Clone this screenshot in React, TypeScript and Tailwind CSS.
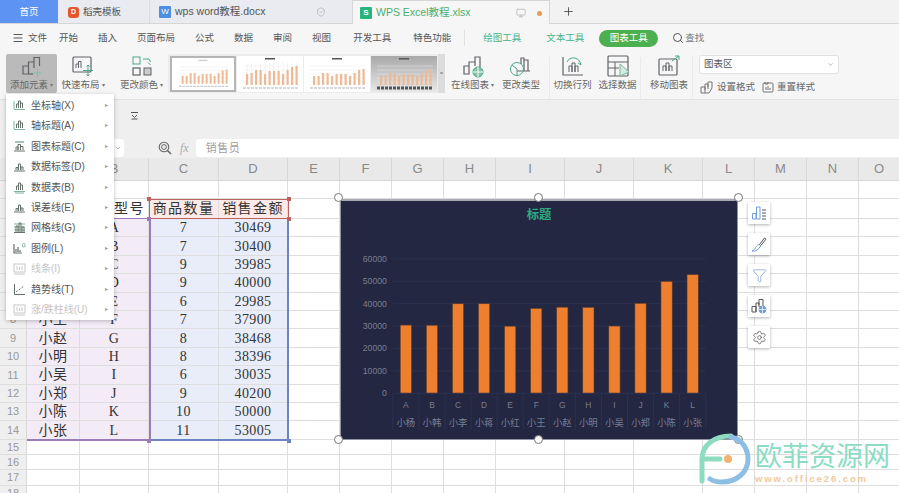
import { ChevronDown, Menu, Plus, Search, Settings, Filter, ShieldCheck, Monitor } from "lucide-react";

const columns = [
  { label: "A", width: "w-[53px]" },
  { label: "B", width: "w-[69px]" },
  { label: "C", width: "w-[70px]" },
  { label: "D", width: "w-[69px]" },
  { label: "E", width: "w-[52px]" },
  { label: "F", width: "w-[52px]" },
  { label: "G", width: "w-[52px]" },
  { label: "H", width: "w-[52px]" },
  { label: "I", width: "w-[69px]" },
  { label: "J", width: "w-[69px]" },
  { label: "K", width: "w-[69px]" },
  { label: "L", width: "w-[52px]" },
  { label: "M", width: "w-[52px]" },
  { label: "N", width: "w-[52px]" },
  { label: "O", width: "w-[41px]" },
];

const sales = [
  ["小杨", "A", "7", 30469],
  ["小韩", "B", "7", 30400],
  ["小李", "C", "9", 39985],
  ["小蒋", "D", "9", 40000],
  ["小红", "E", "6", 29985],
  ["小王", "F", "7", 37900],
  ["小赵", "G", "8", 38468],
  ["小明", "H", "8", 38396],
  ["小吴", "I", "6", 30035],
  ["小郑", "J", "9", 40200],
  ["小陈", "K", "10", 50000],
  ["小张", "L", "11", 53005],
] as const;

const menuItems = [
  { label: "坐标轴(X)", kind: "axis" },
  { label: "轴标题(A)", kind: "axisTitle" },
  { label: "图表标题(C)", kind: "title" },
  { label: "数据标签(D)", kind: "bars" },
  { label: "数据表(B)", kind: "table" },
  { label: "误差线(E)", kind: "bars" },
  { label: "网格线(G)", kind: "grid" },
  { label: "图例(L)", kind: "legend" },
  { label: "线条(I)", kind: "lines", disabled: true },
  { label: "趋势线(T)", kind: "trend" },
  { label: "涨/跌柱线(U)", kind: "updown", disabled: true },
];

function MenuIcon({ kind, disabled }: { kind: string; disabled?: boolean }) {
  const stroke = disabled ? "#c8c8c8" : "#66706a";
  const accent = disabled ? "#d5d5d5" : "#7fb59b";
  return (
    <svg width="13" height="13" viewBox="0 0 13 13" fill="none" stroke={stroke} strokeWidth="1">
      {(kind === "axis" || kind === "axisTitle" || kind === "table") && (
        <>
          <path d="M3.5 9V5H5.5V9M5.5 9V2H7.5V9M7.5 9V4H9.5V9" />
          <path d="M1 10.5H12" stroke={accent} />
          {kind !== "table" && <path d="M1 2V10" stroke={accent} />}
          {kind === "table" && <path d="M2 12H11" stroke={accent} />}
        </>
      )}
      {kind === "title" && (
        <>
          <path d="M2 2H11" stroke={accent} strokeWidth="1.5" />
          <path d="M3 10V7H5V10M5 10V4.5H7.5V10M7.5 10V6.5H10V10M1 11H12" />
        </>
      )}
      {kind === "bars" && <path d="M3 10V7.5H5V10M5.5 10V4H7.5V10M8 10V7H10V10M1 11H12" />}
      {kind === "grid" && (
        <>
          <path d="M1 3H12M1 6H12M1 9H12" stroke={accent} />
          <path d="M3 11V5H5V11M6 11V2H8V11M9 11V6H11V11M1 11.5H12" />
        </>
      )}
      {kind === "legend" && (
        <>
          <path d="M1 2V11H9M3 10V7M5 10V5M7 10V8" strokeWidth="1.2" />
          <rect x="9.5" y="1.5" width="2.5" height="3.5" rx="1" stroke={accent} />
        </>
      )}
      {(kind === "lines" || kind === "updown") && (
        <>
          <rect x="1" y="2" width="11" height="8" />
          <path d="M4 4V8M6.5 5V8M9 4V8M1 12H12" />
        </>
      )}
      {kind === "trend" && (
        <>
          <path d="M1.5 1V11.5H12" />
          <path d="M3 9L11 3" strokeDasharray="2 1.5" />
        </>
      )}
    </svg>
  );
}

function RibbonIcon({ kind }: { kind: string }) {
  const s = "#5f6368";
  return (
    <svg width="26" height="24" viewBox="0 0 26 24" fill="none" stroke={s} strokeWidth="1">
      {kind === "add" && (
        <>
          <path d="M4 20V12H9.5V20H4ZM9.5 20V8H15M15 14V3.5H20.5V12" strokeWidth="1.2" />
          <path d="M9.5 20H14" strokeWidth="1.2" />
          <path d="M18.5 15V23M14.5 19H22.5" stroke="#79c39d" />
        </>
      )}
      {kind === "layout" && (
        <>
          <rect x="3" y="3" width="18" height="15" rx="1" strokeWidth="1.2" />
          <path d="M6 14V10H8.5V14M8.5 14V7.5H11V14" />
          <path d="M18 11V22M13 16.5H23M16.5 12.5L18 11L19.5 12.5M16.5 20.5L18 22L19.5 20.5" stroke="#4ea688" />
        </>
      )}
      {kind === "color" && (
        <>
          <rect x="4" y="3" width="7" height="7" stroke="#4ea688" />
          <rect x="4" y="14" width="7" height="7" strokeWidth="1.2" />
          <rect x="15" y="14" width="7" height="7" fill="#ccc" />
          <path d="M14 5H20L21.5 8M21.5 11L19 8.5" stroke="#4ea688" />
        </>
      )}
      {kind === "online" && (
        <>
          <path d="M4 20V12H9V20H4ZM9 20V8H15V12M15 8V3H20V13" strokeWidth="1.2" />
          <circle cx="18" cy="18" r="5" fill="#7fc4a4" stroke="#4ea688" />
          <path d="M13 18H23M18 13V23" stroke="#fff" />
        </>
      )}
      {kind === "type" && (
        <>
          <path d="M13 10V4H16V17M16 6H20V17M9 17H22" strokeWidth="1.2" />
          <circle cx="9" cy="15" r="6.5" stroke="#4ea688" />
          <path d="M9 15L4 11M9 15V21" stroke="#4ea688" />
        </>
      )}
      {kind === "switch" && (
        <>
          <path d="M3 3V21H23" strokeWidth="1.2" />
          <path d="M9 18V12H12V18M12 18V9H15V18M15 18V12H18V18" />
          <path d="M7 8C9 3 17 2 20 8L21 11M18 9L21 11" stroke="#4ea688" />
        </>
      )}
      {kind === "select" && (
        <>
          <rect x="3" y="2" width="20" height="20" rx="1" strokeWidth="1.2" />
          <path d="M3 8H23M3 14H14M10 8V22" />
          <path d="M15 10L24 18L15 22Z" fill="#d4e9df" stroke="#7fb59b" />
        </>
      )}
      {kind === "move" && (
        <>
          <rect x="3" y="5" width="18" height="16" rx="1" strokeWidth="1.2" />
          <path d="M7 17V12H10V17M10 17V9H13V17M13 17V12H16V17" />
          <path d="M16 7L23 2M19 2H23V6" stroke="#4ea688" />
        </>
      )}
    </svg>
  );
}

function Thumb({ bars, selected, dark, lines }: { bars: number[]; selected?: boolean; dark?: boolean; lines?: boolean }) {
  return (
    <div className={`h-[36px] w-[66px] shrink-0 ${selected ? "border-2 border-[#b5b5b5] bg-white" : dark ? "bg-gradient-to-b from-[#a9a9a9] to-[#e8e8e8]" : "bg-white"}`}>
      <svg width="100%" height="100%" viewBox="0 0 66 36">
        <rect x="28" y="2" width="10" height="1.5" fill={selected ? "#ccc" : "#555"} />
        {[10, 14, 18, 22, 26].map((y) => (
          <path key={y} d={`M6 ${y}H62`} stroke="#e9e9e9" strokeWidth="0.5" />
        ))}
        {bars.map((h, i) => (
          <g key={i}>
            {lines && <path d={`M${10 + i * 4.5} 7V29`} stroke="#e4e4e4" strokeWidth="0.5" />}
            <rect x={9 + i * 4.5} y={29 - h} width="2.2" height={h} fill="#eeb995" />
          </g>
        ))}
        <path d="M6 32H62" stroke={dark ? "#555" : "#ccc"} strokeWidth={dark ? "3" : "1.5"} strokeDasharray="3 1" />
      </svg>
    </div>
  );
}

function RibbonButton({ icon, label, arrow, width, active }: { icon: string; label: string; arrow?: boolean; width: string; active?: boolean }) {
  return (
    <div className={`flex h-[39px] shrink-0 flex-col items-center justify-between rounded-[2px] pb-[2px] ${width} ${active ? "bg-[#bababa]" : ""}`}>
      <RibbonIcon kind={icon} />
      <div className="flex items-center whitespace-nowrap text-[9.5px] leading-[12px] text-[#666]">
        {label}
        {arrow && <span className="ml-[2px] text-[6px] text-[#777]">▾</span>}
      </div>
    </div>
  );
}

function Separator() {
  return <div className="mt-[3px] h-[42px] w-px shrink-0 bg-[#ebebeb]" />;
}

function SideTool({ children }: { children: React.ReactNode }) {
  return <div className="flex h-[22px] w-[22px] items-center justify-center bg-white shadow-[0_1px_3px_rgba(0,0,0,0.3)]">{children}</div>;
}

const Handle = ({ className }: { className: string }) => (
  <div className={`absolute h-[9px] w-[9px] rounded-full border border-[#777] bg-white ${className}`} />
);

const Corner = ({ className }: { className: string }) => <div className={`absolute h-[4px] w-[4px] ${className}`} />;

export default function App() {
  const plotBottom = 393.7;
  const slot = 26.4;
  const plotLeft = 391;

  return (
    <div className="relative h-[493px] w-[899px] overflow-hidden bg-white font-['Liberation_Sans','Noto_Sans_CJK_SC',sans-serif]">
      {/* tabs */}
      <div className="flex h-[24px] items-stretch border-b border-[#d6d6d6] bg-[#f2f2f2] text-[10.5px]">
        <div className="flex w-[58px] items-center justify-center bg-[#5d93f2] pt-[1px] text-[9.5px] text-white">首页</div>
        <div className="flex w-[92px] items-center gap-[4px] border-r border-[#d8dbe0] bg-[#e9ebf0] pl-[10px] pt-[1px] text-[9.5px] text-[#555]">
          <span className="flex h-[11px] w-[11px] items-center justify-center rounded-[3px] bg-[#e8552d] text-[7px] font-bold text-white">D</span>
          稻壳模板
        </div>
        <div className="flex w-[202px] items-center bg-[#e9ebf0] pl-[9px] pt-[1px] text-[#555]">
          <span className="mr-[4px] flex h-[12px] w-[12px] items-center justify-center rounded-[1px] bg-[#4c8fdf] text-[8px] text-white">W</span>
          wps word教程.docx
          <ShieldCheck className="ml-[51px] h-[10px] w-[10px] text-[#b5b8bd]" />
        </div>
        <div className="flex h-[24px] w-[198px] items-center border-x border-t border-[#d6d6d6] bg-[#f6f6f6] pl-[7px] pt-[1px] text-[#4caf6e]">
          <span className="mr-[4px] flex h-[12px] w-[12px] items-center justify-center rounded-[1px] bg-[#26b57f] text-[8px] font-bold text-white">S</span>
          WPS Excel教程.xlsx
          <Monitor className="ml-[45px] h-[10px] w-[10px] text-[#b8b8b8]" />
          <span className="ml-[11px] h-[5px] w-[5px] rounded-full bg-[#eb9a56]" />
        </div>
        <div className="flex w-[36px] items-center justify-center text-[#444]">
          <Plus className="h-[13px] w-[13px]" strokeWidth={1.6} />
        </div>
      </div>

      {/* menu row */}
      <div className="flex h-[26px] items-center bg-[#f6f6f6] pl-[12px] pt-[2px] text-[9.5px] text-[#555]">
        <Menu className="h-[12px] w-[12px] text-[#555]" />
        <span className="ml-[4px]">文件</span>
        <div className="ml-[12px] flex gap-[20px]">
          {["开始", "插入", "页面布局", "公式", "数据", "审阅", "视图"].map((m) => (
            <span key={m} className="whitespace-nowrap">{m}</span>
          ))}
          <span className="ml-[2px] whitespace-nowrap">开发工具</span>
          <span className="ml-[2px] whitespace-nowrap">特色功能</span>
        </div>
        <div className="ml-[13px] h-[16px] w-px bg-[#e2e2e2]" />
        <span className="ml-[18px] text-[#45b58c]">绘图工具</span>
        <span className="ml-[25px] text-[#45b58c]">文本工具</span>
        <span className="ml-[15px] flex h-[17px] w-[59px] items-center justify-center rounded-full bg-[#4caf50] text-white">图表工具</span>
        <Search className="ml-[14px] h-[12px] w-[12px] text-[#555]" />
        <span className="ml-[1px] text-[#777]">查找</span>
      </div>

      {/* ribbon */}
      <div className="flex h-[50px] items-start gap-[3px] border-b border-[#e2e2e2] bg-[#f6f6f6] pl-[6px] pt-[4px]">
        <RibbonButton icon="add" label="添加元素" arrow width="w-[51px]" active />
        <RibbonButton icon="layout" label="快速布局" arrow width="w-[46px]" />
        <div className="ml-[9px]">
          <RibbonButton icon="color" label="更改颜色" arrow width="w-[47px]" />
        </div>
        <div className="flex h-[39px] w-[277px] shrink-0 items-center gap-[1px] rounded-[2px] bg-[#ececec] pl-[2px]">
          <Thumb selected bars={[9, 9, 12, 12, 9, 11, 11, 11, 9, 12, 15, 16]} />
          <Thumb lines bars={[11, 12, 15, 15, 11, 14, 14, 14, 11, 15, 18, 19]} />
          <Thumb bars={[9, 9, 12, 12, 9, 11, 11, 11, 9, 12, 15, 16]} />
          <Thumb dark bars={[9, 9, 12, 12, 9, 11, 11, 11, 9, 12, 15, 16]} />
          <div className="flex h-full flex-1 items-center justify-center bg-[#dcdcdc] text-[6px] text-[#777]">=</div>
        </div>
        <div className="ml-[2px]">
          <RibbonButton icon="online" label="在线图表" arrow width="w-[45px]" />
        </div>
        <div className="ml-[3px]">
          <RibbonButton icon="type" label="更改类型" width="w-[40px]" />
        </div>
        <div className="ml-[5px]"><Separator /></div>
        <RibbonButton icon="switch" label="切换行列" width="w-[39px]" />
        <div className="ml-[3px]">
          <RibbonButton icon="select" label="选择数据" width="w-[39px]" />
        </div>
        <Separator />
        <div className="ml-[5px]">
          <RibbonButton icon="move" label="移动图表" width="w-[40px]" />
        </div>
        <Separator />
        <div className="ml-[3px] flex w-[143px] shrink-0 flex-col pt-[1px]">
          <div className="flex h-[19px] w-[140px] items-center justify-between rounded-[3px] border border-[#e2e2e2] bg-white px-[4px] text-[9.5px] text-[#555]">
            图表区
            <ChevronDown className="h-[7px] w-[7px] text-[#888]" />
          </div>
          <div className="mt-[6px] flex items-center text-[9.5px] text-[#666]">
            <svg width="14" height="13" viewBox="0 0 14 13" fill="none" stroke="#777" className="ml-[1px]">
              <path d="M1 12V6H5V12H1ZM5 9V3H8V8M8 6V1H12V7L9 12H5" />
            </svg>
            <span className="ml-[3px]">设置格式</span>
            <svg width="12" height="12" viewBox="0 0 12 12" fill="none" stroke="#777" className="ml-[7px]">
              <rect x="1" y="2" width="10" height="9" rx="1" />
              <path d="M3 1V3H6V1M4 9V6M6 9V5M8 9V7" />
            </svg>
            <span className="ml-[3px]">重置样式</span>
          </div>
        </div>
      </div>

      {/* formula area */}
      <div className="flex h-[58px] flex-col justify-between bg-[#efefef] pb-[1px] pt-[10px]">
        <div className="ml-[129px] flex h-[10px] w-[10px] items-center justify-center">
          <svg width="9" height="9" viewBox="0 0 9 9" fill="none" stroke="#555">
            <path d="M1 1.5H8M2 4L4.5 6.5L7 4M1.5 8H7.5" />
          </svg>
        </div>
        <div className="flex h-[18px] items-center">
          <div className="ml-[100px] flex h-[18px] w-[24px] items-center justify-end rounded-[3px] bg-white pr-[2px]">
            <ChevronDown className="h-[8px] w-[8px] text-[#999]" />
          </div>
          <svg width="14" height="14" viewBox="0 0 14 14" fill="none" stroke="#666" className="ml-[34px]">
            <circle cx="6" cy="6" r="4.8" strokeWidth="1.1" />
            <circle cx="6" cy="6" r="2.4" />
            <path d="M9.5 9.5L13 13" strokeWidth="1.6" />
          </svg>
          <span className="ml-[8px] font-['Liberation_Serif',serif] text-[12px] italic text-[#aaa]">fx</span>
          <div className="ml-[7px] flex h-[18px] flex-1 items-center rounded-l-[3px] bg-white pl-[10px] text-[11px] tracking-[0.5px] text-[#a0a0a0]">销售员</div>
        </div>
      </div>

      {/* column headers */}
      <div className="flex h-[23px] border-b border-[#d5d5d5] bg-[#e9e9e9] text-[13px] text-[#8a8a8a]">
        <div className="w-[27px] shrink-0 border-r border-[#d8d8d8]" />
        {columns.map((c) => (
          <div key={c.label} className={`flex shrink-0 items-center justify-center border-r border-[#d8d8d8] ${c.width}`}>{c.label}</div>
        ))}
      </div>

      {/* sheet rows */}
      <div className="font-['Liberation_Serif','Noto_Sans_CJK_SC',serif] text-[14px] text-[#333]">
        <Row number={1} height="h-[18px]" />
        <Row number={2} height="h-[20px]" cells={["销售员", "产品型号", "商品数量", "销售金额"]} header />
        {sales.map((r, i) => (
          <Row key={r[0]} number={i + 3} height="h-[18.4px]" cells={[r[0], r[1], r[2], String(r[3])]} tinted />
        ))}
        {[15, 16, 17, 18].map((n) => (
          <Row key={n} number={n} height="h-[15.4px]" />
        ))}
      </div>

      {/* selection ranges */}
      <div className="absolute left-[27px] top-[218px] h-[223px] w-[122px] border-b-2 border-t border-[#9b7bb8]" />
      <div className="absolute left-[149px] top-[199px] h-[20px] w-[140px] border border-[#c0605c]" />
      <div className="absolute left-[149px] top-[219px] h-[222px] w-[140px] border-x-2 border-b-2 border-[#6c84c4] border-l-[#9b7bb8]" />
      <Corner className="left-[147px] top-[197px] bg-[#c0605c]" />
      <Corner className="left-[287px] top-[197px] bg-[#c0605c]" />
      <Corner className="left-[147px] top-[217px] bg-[#9b7bb8]" />
      <Corner className="left-[287px] top-[217px] bg-[#c0605c]" />
      <Corner className="left-[147px] top-[439px] bg-[#9b7bb8]" />
      <Corner className="left-[287px] top-[439px] bg-[#6c84c4]" />

      {/* chart */}
      <svg className="absolute left-[340px] top-[199px] h-[241px] w-[398px] border border-[#8f93a3] border-t-2 border-t-[#a9abb3] bg-[#232741]" viewBox="340 199 398 241">
        <text x="539" y="217" textAnchor="middle" className="fill-[#2fa982] text-[12.5px] font-bold">标题</text>
        {[0, 1, 2, 3, 4, 5, 6].map((i) => {
          const y = plotBottom - i * 22.67;
          return (
            <g key={i}>
              {i > 0 && <path d={`M391 ${y}H708`} stroke="#2c3150" strokeWidth="1" />}
              <text x="385" y={y + 3} textAnchor="end" className="fill-[#7a7e93] text-[8.8px]">{i * 10000}</text>
            </g>
          );
        })}
        {sales.map((r, i) => {
          const h = (r[3] / 60000) * 136;
          const cx = plotLeft + slot * (i + 0.5);
          return (
            <g key={r[0]}>
              <rect x={cx - 5.7} y={plotBottom - h} width="11.4" height={h} fill="#ee7f2f" stroke="#5a3b2a" strokeWidth="0.6" />
              <path d={`M${plotLeft + slot * i} 393.7V431`} stroke="#2c3150" />
              <text x={cx} y="409" textAnchor="middle" className="fill-[#7a7e93] text-[8.5px]">{r[1]}</text>
              <text x={cx} y="427" textAnchor="middle" className="fill-[#7a7e93] text-[9.5px]">{r[0]}</text>
            </g>
          );
        })}
        <path d="M391 393.7H708M708 393.7V431" stroke="#2c3150" />
      </svg>
      <Handle className="left-[334px] top-[193px]" />
      <Handle className="left-[534px] top-[193px]" />
      <Handle className="left-[734px] top-[193px]" />
      <Handle className="left-[334px] top-[435px]" />
      <Handle className="left-[534px] top-[435px]" />
      <Handle className="left-[734px] top-[435px]" />

      {/* chart side tools */}
      <div className="absolute left-[748px] top-[202px] flex flex-col gap-[9px]">
        <SideTool>
          <svg width="16" height="16" viewBox="0 0 16 16" fill="none" stroke="#6f9bd8">
            <path d="M1.5 14V8.5H5V14ZM5.5 14V2H9V14Z" />
            <path d="M11 5H15M11 8H15M11 11H15M11 14H15" stroke="#555" />
          </svg>
        </SideTool>
        <SideTool>
          <svg width="16" height="16" viewBox="0 0 16 16" fill="none">
            <path d="M1 15C3 14.5 3.5 13 4.5 11.5C5.5 10 7 8.5 8.5 8.5L9.5 9.8C9 11.5 7.5 13 6 14C4.5 15 2.5 15.2 1 15Z" stroke="#6f9bd8" />
            <path d="M8.5 8.5L13.5 2L15 3.2L9.5 9.8" stroke="#555" />
          </svg>
        </SideTool>
        <SideTool>
          <Filter className="h-[15px] w-[15px] text-[#7f9fd0]" strokeWidth={1.2} />
        </SideTool>
        <SideTool>
          <svg width="16" height="16" viewBox="0 0 16 16" fill="none" stroke="#555">
            <path d="M1 14V8.5H5V14ZM5 14V5H8V9M8 7V1.5H12V9" />
            <circle cx="11.5" cy="11.5" r="3.5" fill="#6f9bd8" stroke="#6f9bd8" />
            <path d="M8 11.5H15M11.5 8V15" stroke="#fff" strokeWidth="0.7" />
          </svg>
        </SideTool>
        <SideTool>
          <Settings className="h-[15px] w-[15px] text-[#555]" strokeWidth={1.2} />
        </SideTool>
      </div>

      {/* add element dropdown */}
      <div className="absolute left-[6px] top-[94px] flex h-[226px] w-[108px] flex-col bg-white pt-[1px] shadow-[0_1px_4px_rgba(0,0,0,0.25)]">
        {menuItems.map((item) => (
          <div key={item.label} className={`flex h-[20.5px] items-center pl-[7px] pr-[6px] text-[10px] ${item.disabled ? "text-[#c4c4c4]" : "text-[#555]"}`}>
            <MenuIcon kind={item.kind} disabled={item.disabled} />
            <span className="ml-[5px] flex-1 whitespace-nowrap">{item.label}</span>
            <span className="text-[6px] text-[#999]">▸</span>
          </div>
        ))}
      </div>

      {/* site watermark */}
      <svg className="absolute left-[695px] top-[430px] h-[63px] w-[60px]" viewBox="695 430 60 63" fill="none">
        <path d="M702 481V459C702 445 714 436 731 436M702 459H720" stroke="#8ddcc0" strokeWidth="5" strokeLinecap="round" />
        <path d="M731 437C742 439 748 449 748 459C748 473 736 482 722 482C717 482 713 481 710 479" stroke="#8dbfe4" strokeWidth="5" strokeLinecap="round" />
        <circle cx="728" cy="459" r="4" fill="#f2b36e" />
      </svg>
      <div className="absolute left-[755px] top-[441px] flex w-[140px] flex-col items-start">
        <span className="whitespace-nowrap text-[27px] leading-[32px] text-[#8adcc4]">欧菲资源网</span>
        <span className="whitespace-nowrap text-[9.5px] font-bold leading-[11px] tracking-[1.9px] text-[#f3c89c]">www.office26.com</span>
      </div>
    </div>
  );
}

function Row({ number, height, cells, tinted, header }: { number: number; height: string; cells?: string[]; tinted?: boolean; header?: boolean }) {
  return (
    <div className={`flex border-b border-[#dedede] ${height}`}>
      <div className="flex w-[27px] shrink-0 items-center justify-center border-r border-[#d8d8d8] bg-[#efefef] font-['Liberation_Sans',sans-serif] text-[11px] text-[#999]">{number}</div>
      {columns.map((c, i) => {
        let tint = "";
        if (tinted && i < 2) tint = "bg-[#f3ecf7]";
        if (tinted && (i === 2 || i === 3)) tint = "bg-[#e8edf9]";
        if (header && (i === 2 || i === 3)) tint = "bg-[#fbeae7]";
        return (
          <div key={c.label} className={`flex shrink-0 items-center justify-center whitespace-nowrap border-r border-[#dedede] ${c.width} ${tint} ${header ? "tracking-[1.4px]" : "tracking-[0.4px]"}`}>
            {cells?.[i]}
          </div>
        );
      })}
    </div>
  );
}
